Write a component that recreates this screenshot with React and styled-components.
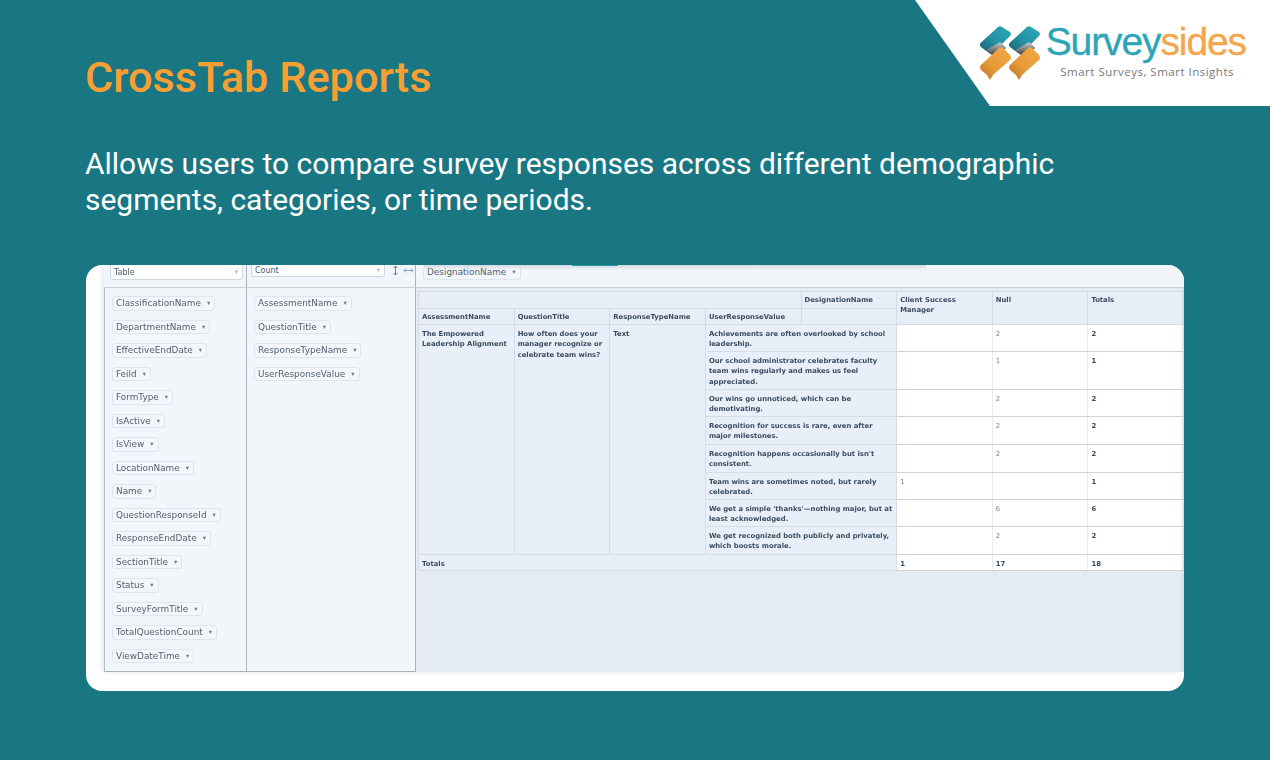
import React from 'react';
import styled, { createGlobalStyle } from 'styled-components';

const GlobalStyle = createGlobalStyle`
  html, body {
    margin: 0;
    padding: 0;
    background: #197784;
  }
`;

const filterFields = [
  'ClassificationName', 'DepartmentName', 'EffectiveEndDate', 'Feild', 'FormType', 'IsActive',
  'IsView', 'LocationName', 'Name', 'QuestionResponseId', 'ResponseEndDate', 'SectionTitle',
  'Status', 'SurveyFormTitle', 'TotalQuestionCount', 'ViewDateTime',
];

const rowFields = ['AssessmentName', 'QuestionTitle', 'ResponseTypeName', 'UserResponseValue'];

const rows = [
  { text: 'Achievements are often overlooked by school leadership.', h: 27, a: '', b: '2', t: '2' },
  { text: 'Our school administrator celebrates faculty team wins regularly and makes us feel appreciated.', h: 38, a: '', b: '1', t: '1' },
  { text: 'Our wins go unnoticed, which can be demotivating.', h: 27, a: '', b: '2', t: '2' },
  { text: 'Recognition for success is rare, even after major milestones.', h: 28, a: '', b: '2', t: '2' },
  { text: "Recognition happens occasionally but isn't consistent.", h: 28, a: '', b: '2', t: '2' },
  { text: 'Team wins are sometimes noted, but rarely celebrated.', h: 27, a: '1', b: '', t: '1' },
  { text: "We get a simple 'thanks'—nothing major, but at least acknowledged.", h: 27, a: '', b: '6', t: '6' },
  { text: 'We get recognized both publicly and privately, which boosts morale.', h: 28, a: '', b: '2', t: '2' },
];

const Slide = styled.div`
  position: relative;
  width: 1270px;
  height: 760px;
  overflow: hidden;
  background: #197784;
  padding: 54px 86px 0 85px;
  box-sizing: border-box;
  font-family: Roboto, sans-serif;
`;

const LogoCorner = styled.div`
  position: absolute;
  top: 0;
  right: 0;
  width: 355px;
  height: 106px;
  background: #fff;
  clip-path: polygon(0 0, 100% 0, 100% 100%, 75px 100%);
  display: flex;
  padding: 22px 0 0 60px;
  box-sizing: border-box;
  gap: 5px;
`;

const LogoText = styled.div`
  display: flex;
  flex-direction: column;
  align-items: flex-end;
  width: 201px;
`;

const Brand = styled.div`
  font-family: 'Liberation Sans', Arial, sans-serif;
  font-size: 39px;
  line-height: 40px;
  letter-spacing: -1.1px;
  color: #2ba5b8;
  -webkit-text-stroke: 0.3px currentColor;
  white-space: nowrap;
`;

const BrandAccent = styled.span`
  color: #f5a54a;
`;

const Tagline = styled.div`
  font-family: 'Open Sans', sans-serif;
  font-size: 11.5px;
  line-height: 14px;
  letter-spacing: 0.5px;
  color: #77797b;
  margin: 3px 12px 0 0;
  white-space: nowrap;
`;

const Title = styled.h1`
  margin: 0;
  font-size: 43.3px;
  line-height: 48px;
  font-weight: 500;
  color: #f79f33;
`;

const Lead = styled.p`
  margin: 44px 0 0;
  width: 1000px;
  font-size: 29.96px;
  line-height: 36px;
  font-weight: 400;
  color: #fff;
`;

const Card = styled.div`
  margin: 47px 0 0 1px;
  width: 1098px;
  height: 426px;
  background: #fff;
  border-radius: 16px;
  overflow: hidden;
  padding: 0 0 19px 18px;
  box-sizing: border-box;
`;

const Pivot = styled.div`
  display: grid;
  grid-template-columns: 143px 169px 1fr;
  grid-template-rows: 23px 1fr;
  height: 100%;
  background: #f2f6fb;
  font-family: 'DejaVu Sans', sans-serif;
  color: #4f5f70;
  box-shadow: -2px 0 4px rgba(120, 130, 150, 0.18);
  filter: blur(0.4px);
`;

const TopCell = styled.div`
  display: flex;
  align-items: flex-start;
  gap: 6px;
  padding-left: ${(p) => p.$pad}px;
  border-bottom: 1px solid #c9d1dc;
  border-right: ${(p) => (p.$last ? 'none' : '1px solid #a9b2bd')};
  position: relative;
`;

const Select = styled.div`
  width: ${(p) => p.$w}px;
  height: ${(p) => p.$h}px;
  margin-top: -1px;
  background: #fff;
  border: 1px solid #cfd6df;
  border-radius: 0 0 3px 3px;
  box-sizing: border-box;
  display: flex;
  align-items: center;
  justify-content: space-between;
  padding: 0 4px 0 3px;
  font-size: 8px;
  color: #4a5a6a;
`;

const Caret = styled.span`
  font-size: 6.5px;
  line-height: 1;
  color: #6f7c89;
`;

const SelectCaret = styled(Caret)`
  color: #aab4bf;
`;

const ResizeIcons = styled.div`
  display: flex;
  align-items: center;
  gap: 3px;
  height: 10px;
`;

const TopShadow = styled.div`
  position: absolute;
  top: 0;
  left: 8px;
  width: 502px;
  height: 5px;
  background: linear-gradient(#d4dae2, rgba(242, 246, 251, 0));
`;

const TealTab = styled.div`
  position: absolute;
  top: 0;
  left: 156px;
  width: 46px;
  height: 1px;
  background: #2b97a8;
`;

const FieldColumn = styled.div`
  display: flex;
  flex-direction: column;
  align-items: flex-start;
  gap: 9px;
  padding: 8px 0 0 ${(p) => p.$pad}px;
  border-right: 1px solid #a9b2bd;
  border-bottom: 1px solid #a9b2bd;
  border-left: ${(p) => (p.$edge ? '1px solid #b4bcc7' : 'none')};
`;

const Chip = styled.div`
  display: inline-flex;
  align-items: center;
  gap: 6px;
  height: 14.5px;
  padding: 0 4px 0 3px;
  background: #f3f6fb;
  border: 1px solid #dfe5ee;
  border-radius: 3px;
  font-size: 8.9px;
  color: #53626f;
  white-space: nowrap;
  box-sizing: border-box;
`;

const TableArea = styled.div`
  position: relative;
  background: #e4ebf3;
  padding: 3px 0 0 2px;
  overflow: hidden;

  &::after {
    content: '';
    position: absolute;
    top: 0;
    right: 0;
    bottom: 0;
    width: 4px;
    background: linear-gradient(to right, rgba(200, 208, 220, 0), rgba(200, 208, 220, 0.55));
  }
`;

const PivotTable = styled.table`
  width: 766px;
  table-layout: fixed;
  border-collapse: collapse;
  font-size: 6.85px;
  line-height: 10.3px;
`;

const Head = styled.th`
  background: #e8eef7;
  border: 1px solid #d3dbe6;
  color: #3a4c60;
  font-weight: 700;
  text-align: left;
  vertical-align: top;
  padding: 3px 3px 0;
  height: ${(p) => p.$h}px;
  box-sizing: border-box;
`;

const Label = styled.th`
  background: #e9eff8;
  border: 1px solid #d6dde8;
  border-top-color: ${(p) => (p.$solid ? '#c6cfdb' : '#d6dde8')};
  color: #3a4c60;
  font-weight: 700;
  text-align: left;
  vertical-align: top;
  padding: 4px 3px 0;
  box-sizing: border-box;
`;

const Value = styled.td`
  background: #fff;
  border-top: 1px solid #cdd3da;
  border-bottom: 1px solid #cdd3da;
  border-left: 1px solid #c6ccd4;
  border-right: 1px solid #e6e9ee;
  color: ${(p) => (p.$total ? '#3a4c60' : '#76828e')};
  font-weight: ${(p) => (p.$total ? 700 : 400)};
  vertical-align: top;
  padding: 4px 3px 0;
  box-sizing: border-box;
`;

const LogoMark = () => (
  <svg width="65" height="62" viewBox="975 22 65 62">
    <defs>
      <linearGradient id="teal" x1="1" y1="0" x2="0" y2="1">
        <stop offset="0" stopColor="#2ca8ba" />
        <stop offset="0.55" stopColor="#2391a3" />
        <stop offset="1" stopColor="#145c68" />
      </linearGradient>
      <linearGradient id="grey" x1="0" y1="0" x2="0" y2="1">
        <stop offset="0" stopColor="#c9c9c9" />
        <stop offset="1" stopColor="#2f2f2f" />
      </linearGradient>
      <linearGradient id="orange" x1="1" y1="0" x2="0" y2="1">
        <stop offset="0" stopColor="#f5a845" />
        <stop offset="0.6" stopColor="#e69a38" />
        <stop offset="1" stopColor="#b8722a" />
      </linearGradient>
      <g id="mark">
        <path d="M980.500 43 L998 27 Q1000 25.500 1002 27 L1010 32 Q1012 34 1010 36 L993 53 Q991 55 989 53 L981 47 Q979 45 980.500 43 Z" fill="url(#teal)" />
        <path d="M986.500 50 L1000 42 L1006.500 48 L994 57 Z" fill="url(#grey)" />
        <path d="M981 65 L999 48 Q1001 46.500 1003 48 L1010 55 Q1012 58 1010 60 L993 75 L990 80 L987 75 L981 70 Q979 67 981 65 Z" fill="url(#orange)" />
      </g>
    </defs>
    <use href="#mark" />
    <use href="#mark" x="29" />
  </svg>
);

const ResizeGlyphs = () => (
  <ResizeIcons>
    <svg width="9" height="11" viewBox="0 0 9 11">
      <path d="M4.500 1 V10 M2.500 3 L4.500 1 L6.500 3 M2.500 8 L4.500 10 L6.500 8" fill="none" stroke="#4f86c0" strokeWidth="1" />
    </svg>
    <svg width="11" height="9" viewBox="0 0 11 9">
      <path d="M1 4.500 H10 M3 2.500 L1 4.500 L3 6.500 M8 2.500 L10 4.500 L8 6.500" fill="none" stroke="#7fa6cf" strokeWidth="1" />
    </svg>
  </ResizeIcons>
);

const Field = ({ name }) => (
  <Chip>
    {name}
    <Caret>▾</Caret>
  </Chip>
);

const App = () => (
  <Slide>
    <GlobalStyle />
    <LogoCorner>
      <LogoMark />
      <LogoText>
        <Brand>
          Survey<BrandAccent>sides</BrandAccent>
        </Brand>
        <Tagline>Smart Surveys, Smart Insights</Tagline>
      </LogoText>
    </LogoCorner>

    <Title>CrossTab Reports</Title>
    <Lead>
      Allows users to compare survey responses across different demographic segments, categories, or time periods.
    </Lead>

    <Card>
      <Pivot>
        <TopCell $pad={6}>
          <Select $w={133} $h={16}>
            Table
            <SelectCaret>▾</SelectCaret>
          </Select>
        </TopCell>
        <TopCell $pad={4}>
          <Select $w={134} $h={13}>
            Count
            <SelectCaret>▾</SelectCaret>
          </Select>
          <ResizeGlyphs />
        </TopCell>
        <TopCell $pad={7} $last>
          <TopShadow />
          <TealTab />
          <Field name="DesignationName" />
        </TopCell>

        <FieldColumn $pad={7} $edge>
          {filterFields.map((name) => (
            <Field key={name} name={name} />
          ))}
        </FieldColumn>
        <FieldColumn $pad={7}>
          {rowFields.map((name) => (
            <Field key={name} name={name} />
          ))}
        </FieldColumn>

        <TableArea>
          <PivotTable>
            <colgroup>
              <col span="8" />
            </colgroup>
            <thead>
              <tr>
                <Head colSpan="4" $h={17} />
                <Head $h={17}>DesignationName</Head>
                <Head rowSpan="2" $h={33}>Client Success Manager</Head>
                <Head rowSpan="2" $h={33}>Null</Head>
                <Head rowSpan="2" $h={33}>Totals</Head>
              </tr>
              <tr>
                <Head $h={16}>AssessmentName</Head>
                <Head $h={16}>QuestionTitle</Head>
                <Head $h={16}>ResponseTypeName</Head>
                <Head $h={16}>UserResponseValue</Head>
                <Head $h={16} />
              </tr>
            </thead>
            <tbody>
              {rows.map((row, i) => (
                <tr key={row.text} style={{ height: row.h }}>
                  {i === 0 && (
                    <>
                      <Label rowSpan="8">The Empowered Leadership Alignment</Label>
                      <Label rowSpan="8">How often does your manager recognize or celebrate team wins?</Label>
                      <Label rowSpan="8">Text</Label>
                    </>
                  )}
                  <Label colSpan="2" $solid={i > 0}>{row.text}</Label>
                  <Value>{row.a}</Value>
                  <Value>{row.b}</Value>
                  <Value $total>{row.t}</Value>
                </tr>
              ))}
              <tr style={{ height: 16 }}>
                <Label colSpan="5">Totals</Label>
                <Value $total>1</Value>
                <Value $total>17</Value>
                <Value $total>18</Value>
              </tr>
            </tbody>
          </PivotTable>
        </TableArea>
      </Pivot>
    </Card>
  </Slide>
);

export default App;
